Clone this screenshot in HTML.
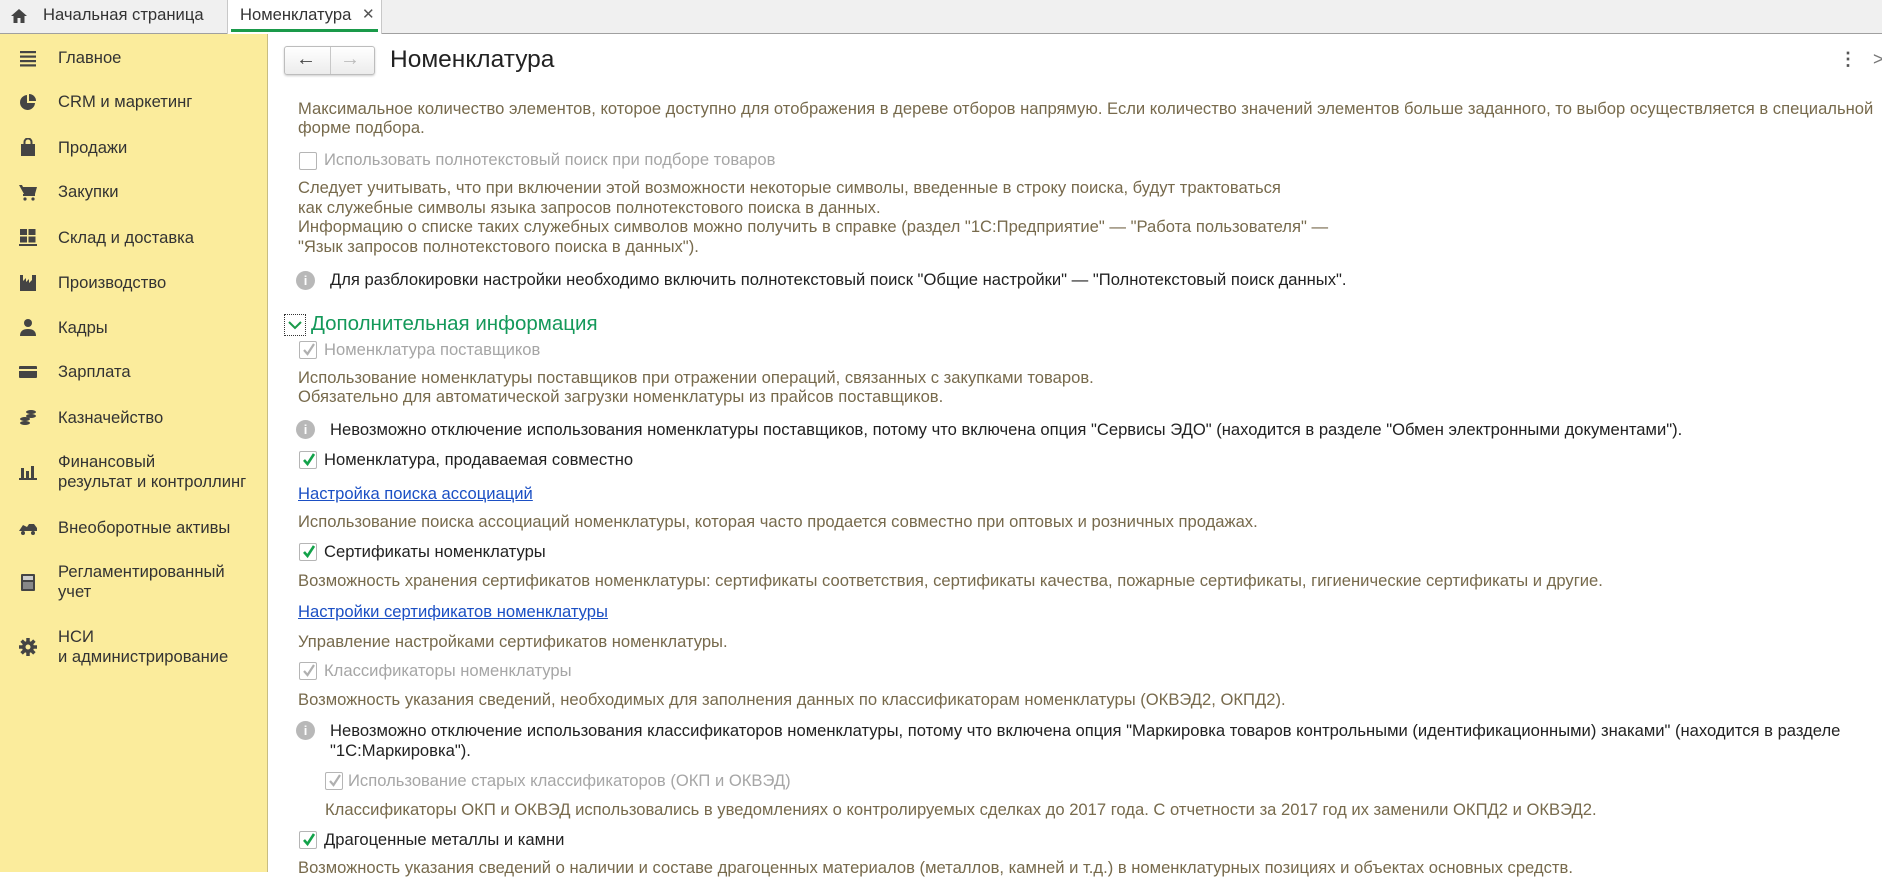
<!DOCTYPE html>
<html><head><meta charset="utf-8"><style>
*{margin:0;padding:0;box-sizing:border-box}
body{width:1882px;height:872px;overflow:hidden;background:#fff;font-family:"Liberation Sans","Noto Sans CJK SC",sans-serif;font-size:16.6px;color:#333;position:relative}
.a{position:absolute;white-space:nowrap;line-height:20px}
#tabs{position:absolute;left:0;top:0;width:1882px;height:34px;background:#f0f0f0;border-bottom:1px solid #a0a0a0}
#side{position:absolute;left:0;top:34px;width:268px;height:838px;background:#fbec9c;border-right:1px solid #c9bd80}
.si{position:absolute;left:58px;font-size:16.6px;color:#333;line-height:20px}
.ic{position:absolute;left:19px;width:18px;height:18px}
.d{color:#776a4c}
.g{color:#a6a6a6}
.k{color:#222}
.l{color:#1b4fc4;text-decoration:underline}
.cb{position:absolute;width:18px;height:18px;border:1px solid #b5b5b5;border-radius:2px;background:#fff}
.cb svg{position:absolute;left:1px;top:0}
.inf{position:absolute;width:19px;height:19px;border-radius:50%;background:#b8b8b8;color:#fff;font-size:13px;font-weight:bold;text-align:center;line-height:19px}
</style></head><body>
<div id="tabs">
 <svg class="a" style="left:10px;top:8px" width="18" height="16" viewBox="0 0 18 16"><path d="M9 1L1 8h2.5v7h4v-5h3v5h4V8H17z" fill="#444"/></svg>
 <div class="a" style="left:43px;top:5px;color:#333">Начальная страница</div>
 <div style="position:absolute;left:227px;top:0;width:155px;height:34px;background:#fff;border-left:1px solid #c8c8c8;border-right:1px solid #c8c8c8"></div>
 <div class="a" style="left:240px;top:5px;color:#333">Номенклатура</div>
 <div class="a" style="left:362px;top:5px;color:#555;font-size:15px">✕</div>
 <div style="position:absolute;left:231px;top:29px;width:147px;height:3px;background:#1a9a4a"></div>
</div>
<div id="side">
 <svg class="ic" style="top:15px" viewBox="0 0 18 18"><rect x="1" y="2" width="16" height="2.2" fill="#444"/><rect x="1" y="6.5" width="16" height="2.2" fill="#444"/><rect x="1" y="11" width="16" height="2.2" fill="#444"/><rect x="1" y="15.3" width="16" height="2.2" fill="#444"/></svg>
 <div class="si" style="top:14px">Главное</div>
 <svg class="ic" style="top:59px" viewBox="0 0 18 18"><path d="M8 2a7.5 7.5 0 1 0 8 8H8z" fill="#444"/><path d="M10 1v7h7a7 7 0 0 0-7-7z" fill="#444"/></svg>
 <div class="si" style="top:58px">CRM и маркетинг</div>
 <svg class="ic" style="top:104px" viewBox="0 0 18 18"><rect x="2" y="6" width="14" height="12" fill="#444"/><path d="M5.5 7V4a3.5 3.5 0 0 1 7 0v3" stroke="#444" stroke-width="2" fill="none"/></svg>
 <div class="si" style="top:104px">Продажи</div>
 <svg class="ic" style="top:149px" viewBox="0 0 18 18"><path d="M0 2h3l1 2h14l-2 7H5z" fill="#444"/><rect x="4" y="11" width="12" height="2" fill="#444"/><circle cx="6" cy="16" r="1.6" fill="#444"/><circle cx="14" cy="16" r="1.6" fill="#444"/></svg>
 <div class="si" style="top:148px">Закупки</div>
 <svg class="ic" style="top:194px" viewBox="0 0 18 18"><rect x="1" y="1" width="7" height="6" fill="#444"/><rect x="9.5" y="1" width="7" height="6" fill="#444"/><rect x="1" y="8.5" width="7" height="6" fill="#444"/><rect x="9.5" y="8.5" width="7" height="6" fill="#444"/><rect x="0" y="16" width="18" height="2" fill="#444"/></svg>
 <div class="si" style="top:194px">Склад и доставка</div>
 <svg class="ic" style="top:239px" viewBox="0 0 18 18"><path d="M1 18V2h3v6l3-3v4l3-3v4l3-3V2h4v16z" fill="#444"/></svg>
 <div class="si" style="top:239px">Производство</div>
 <svg class="ic" style="top:284px" viewBox="0 0 18 18"><circle cx="9" cy="5" r="4" fill="#444"/><path d="M1 18c0-5 3-7 8-7s8 2 8 7z" fill="#444"/></svg>
 <div class="si" style="top:284px">Кадры</div>
 <svg class="ic" style="top:329px" viewBox="0 0 18 18"><rect x="0" y="3" width="18" height="12" rx="1" fill="#444"/><rect x="0" y="6" width="18" height="2" fill="#fbec9c"/></svg>
 <div class="si" style="top:328px">Зарплата</div>
 <svg class="ic" style="top:374px" viewBox="0 0 18 18"><ellipse cx="12" cy="4" rx="5" ry="2" fill="#444"/><ellipse cx="12" cy="8" rx="5" ry="2" fill="#444"/><ellipse cx="6" cy="11" rx="5" ry="2" fill="#444"/><ellipse cx="6" cy="15" rx="5" ry="2" fill="#444"/></svg>
 <div class="si" style="top:374px">Казначейство</div>
 <svg class="ic" style="top:428px" viewBox="0 0 18 18"><rect x="2" y="6" width="3" height="10" fill="#444"/><rect x="7" y="9" width="3" height="7" fill="#444"/><rect x="12" y="4" width="3" height="12" fill="#444"/><rect x="0" y="16" width="18" height="2" fill="#444"/></svg>
 <div class="si" style="top:418px">Финансовый<br>результат и контроллинг</div>
 <svg class="ic" style="top:484px" viewBox="0 0 18 18"><path d="M0 13l4-6 4 2 2-3h5l3 4v3z" fill="#444"/><circle cx="4" cy="15" r="2" fill="#444"/><circle cx="14" cy="15" r="2" fill="#444"/></svg>
 <div class="si" style="top:484px">Внеоборотные активы</div>
 <svg class="ic" style="top:539px" viewBox="0 0 18 18"><rect x="2" y="1" width="14" height="17" rx="1" fill="#444"/><rect x="4" y="3" width="10" height="4" fill="#ccc"/><rect x="4" y="9" width="10" height="7" fill="#888"/></svg>
 <div class="si" style="top:528px">Регламентированный<br>учет</div>
 <svg class="ic" style="top:604px" viewBox="0 0 18 18"><circle cx="9" cy="9" r="6" fill="#444"/><g stroke="#444" stroke-width="3.5"><line x1="9" y1="0" x2="9" y2="18"/><line x1="0" y1="9" x2="18" y2="9"/><line x1="2.6" y1="2.6" x2="15.4" y2="15.4"/><line x1="15.4" y1="2.6" x2="2.6" y2="15.4"/></g><circle cx="9" cy="9" r="2.5" fill="#fbec9c"/></svg>
 <div class="si" style="top:593px">НСИ<br>и администрирование</div>
</div>

<div style="position:absolute;left:284px;top:46px;width:91px;height:29px;border:1px solid #bdbdbd;border-radius:3px;background:linear-gradient(#fff,#ececec);box-shadow:0 1px 2px #ccc"></div>
<div style="position:absolute;left:330px;top:47px;width:1px;height:27px;background:#c8c8c8"></div>
<div class="a" style="left:296px;top:49px;font-size:20px;color:#444;font-weight:bold">←</div>
<div class="a" style="left:340px;top:49px;font-size:20px;color:#bbb;font-weight:bold">→</div>
<div class="a" style="left:390px;top:46px;font-size:24.5px;line-height:28px;color:#222">Номенклатура</div>
<div class="a" style="left:1839px;top:49px;font-size:18px;color:#555;font-weight:bold">⋮</div>
<div class="a" style="left:1873px;top:49px;font-size:18px;color:#777">&gt;</div>

<div class="a d" style="left:298px;top:99px">Максимальное количество элементов, которое доступно для отображения в дереве отборов напрямую. Если количество значений элементов больше заданного, то выбор осуществляется в специальной</div>
<div class="a d" style="left:298px;top:118px">форме подбора.</div>
<div class="cb" style="left:299px;top:152px"></div>
<div class="a g" style="left:324px;top:150px">Использовать полнотекстовый поиск при подборе товаров</div>
<div class="a d" style="left:298px;top:178px">Следует учитывать, что при включении этой возможности некоторые символы, введенные в строку поиска, будут трактоваться</div>
<div class="a d" style="left:298px;top:198px">как служебные символы языка запросов полнотекстового поиска в данных.</div>
<div class="a d" style="left:298px;top:217px">Информацию о списке таких служебных символов можно получить в справке (раздел "1С:Предприятие" — "Работа пользователя" —</div>
<div class="a d" style="left:298px;top:237px">"Язык запросов полнотекстового поиска в данных").</div>
<div class="inf" style="left:296px;top:271px">i</div>
<div class="a k" style="left:330px;top:270px">Для разблокировки настройки необходимо включить полнотекстовый поиск "Общие настройки" — "Полнотекстовый поиск данных".</div>

<div style="position:absolute;left:284px;top:314px;width:22px;height:22px;border:1px dotted #333"></div>
<svg class="a" style="left:287px;top:318px" width="16" height="14" viewBox="0 0 16 14"><path d="M2 4l6 6 6-6" stroke="#1a9a4a" stroke-width="2" fill="none"/></svg>
<div class="a" style="left:311px;top:312px;font-size:20.5px;line-height:24px;color:#14995a">Дополнительная информация</div>

<div class="cb" style="left:299px;top:341px"><svg width="16" height="16" viewBox="0 0 16 16"><path d="M3 8l3.5 4L13 2" stroke="#b0b0b0" stroke-width="2.2" fill="none"/></svg></div>
<div class="a g" style="left:324px;top:340px">Номенклатура поставщиков</div>
<div class="a d" style="left:298px;top:368px">Использование номенклатуры поставщиков при отражении операций, связанных с закупками товаров.</div>
<div class="a d" style="left:298px;top:387px">Обязательно для автоматической загрузки номенклатуры из прайсов поставщиков.</div>
<div class="inf" style="left:296px;top:420px">i</div>
<div class="a k" style="left:330px;top:420px">Невозможно отключение использования номенклатуры поставщиков, потому что включена опция "Сервисы ЭДО" (находится в разделе "Обмен электронными документами").</div>
<div class="cb" style="left:299px;top:451px"><svg width="16" height="16" viewBox="0 0 16 16"><path d="M3 8l3.5 4L13 2" stroke="#13a24a" stroke-width="2.6" fill="none"/></svg></div>
<div class="a k" style="left:324px;top:450px">Номенклатура, продаваемая совместно</div>
<div class="a l" style="left:298px;top:484px">Настройка поиска ассоциаций</div>
<div class="a d" style="left:298px;top:512px">Использование поиска ассоциаций номенклатуры, которая часто продается совместно при оптовых и розничных продажах.</div>
<div class="cb" style="left:299px;top:543px"><svg width="16" height="16" viewBox="0 0 16 16"><path d="M3 8l3.5 4L13 2" stroke="#13a24a" stroke-width="2.6" fill="none"/></svg></div>
<div class="a k" style="left:324px;top:542px">Сертификаты номенклатуры</div>
<div class="a d" style="left:298px;top:571px">Возможность хранения сертификатов номенклатуры: сертификаты соответствия, сертификаты качества, пожарные сертификаты, гигиенические сертификаты и другие.</div>
<div class="a l" style="left:298px;top:602px">Настройки сертификатов номенклатуры</div>
<div class="a d" style="left:298px;top:632px">Управление настройками сертификатов номенклатуры.</div>
<div class="cb" style="left:299px;top:662px"><svg width="16" height="16" viewBox="0 0 16 16"><path d="M3 8l3.5 4L13 2" stroke="#b0b0b0" stroke-width="2.2" fill="none"/></svg></div>
<div class="a g" style="left:324px;top:661px">Классификаторы номенклатуры</div>
<div class="a d" style="left:298px;top:690px">Возможность указания сведений, необходимых для заполнения данных по классификаторам номенклатуры (ОКВЭД2, ОКПД2).</div>
<div class="inf" style="left:296px;top:721px">i</div>
<div class="a k" style="left:330px;top:721px">Невозможно отключение использования классификаторов номенклатуры, потому что включена опция "Маркировка товаров контрольными (идентификационными) знаками" (находится в разделе</div>
<div class="a k" style="left:330px;top:741px">"1С:Маркировка").</div>
<div class="cb" style="left:325px;top:772px"><svg width="16" height="16" viewBox="0 0 16 16"><path d="M3 8l3.5 4L13 2" stroke="#b0b0b0" stroke-width="2.2" fill="none"/></svg></div>
<div class="a g" style="left:348px;top:771px">Использование старых классификаторов (ОКП и ОКВЭД)</div>
<div class="a d" style="left:325px;top:800px">Классификаторы ОКП и ОКВЭД использовались в уведомлениях о контролируемых сделках до 2017 года. С отчетности за 2017 год их заменили ОКПД2 и ОКВЭД2.</div>
<div class="cb" style="left:299px;top:831px"><svg width="16" height="16" viewBox="0 0 16 16"><path d="M3 8l3.5 4L13 2" stroke="#13a24a" stroke-width="2.6" fill="none"/></svg></div>
<div class="a k" style="left:324px;top:830px">Драгоценные металлы и камни</div>
<div class="a d" style="left:298px;top:858px">Возможность указания сведений о наличии и составе драгоценных материалов (металлов, камней и т.д.) в номенклатурных позициях и объектах основных средств.</div>
</body></html>
